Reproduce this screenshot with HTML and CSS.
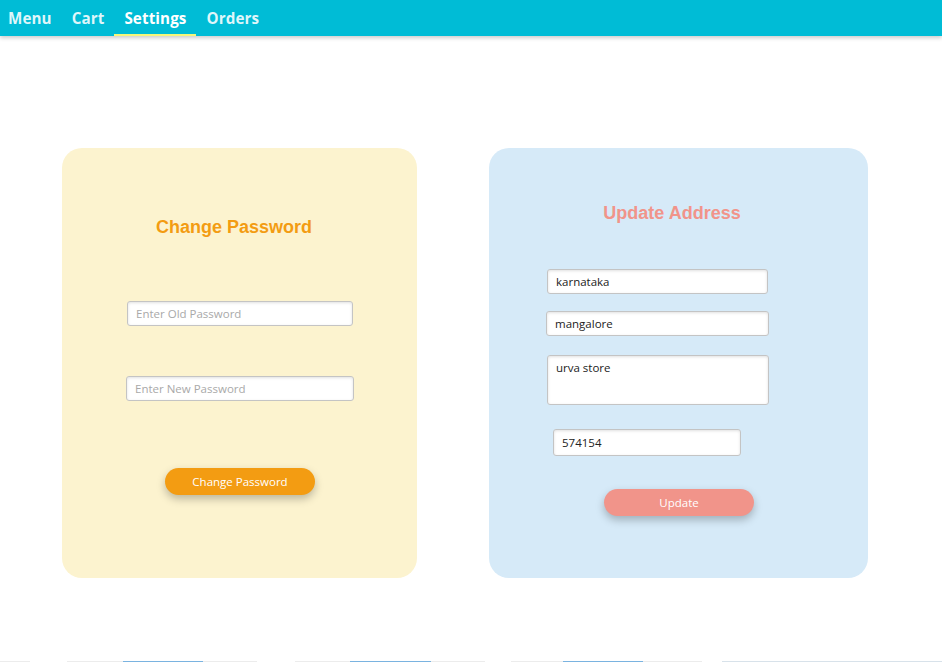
FILE: index.html
```html
<!DOCTYPE html>
<html>
<head>
<meta charset="utf-8">
<link rel="stylesheet" href="styles.css">
</head>
<body>
<nav class="nav">
  <a class="nav-link">Menu</a>
  <a class="nav-link">Cart</a>
  <a class="nav-link active">Settings</a>
  <a class="nav-link">Orders</a>
</nav>
<main class="main">
  <section class="card card-pass">
    <h2 class="title title-pass">Change Password</h2>
    <input class="field f-old" type="password" placeholder="Enter Old Password">
    <input class="field f-new" type="password" placeholder="Enter New Password">
    <button class="btn btn-pass">Change Password</button>
  </section>
  <section class="card card-addr">
    <h2 class="title title-addr">Update Address</h2>
    <input class="field f-state" type="text" value="karnataka">
    <input class="field f-city" type="text" value="mangalore">
    <textarea class="field f-area">urva store</textarea>
    <input class="field f-pin" type="text" value="574154">
    <button class="btn btn-addr">Update</button>
  </section>
</main>
<div class="strip">
  <span class="seg s1"></span>
  <span class="seg s2"><i class="blue b2"></i></span>
  <span class="seg s3"><i class="blue b3"></i></span>
  <span class="seg s4"><i class="blue b4"></i></span>
  <span class="seg s5"></span>
</div>
</body>
</html>
```
FILE: styles.css
```css
* { box-sizing: border-box; }
html, body { margin: 0; padding: 0; }
body {
  width: 942px;
  height: 662px;
  overflow: hidden;
  background: #fff;
  font-family: "Open Sans", "Noto Sans", sans-serif;
  display: flex;
  flex-direction: column;
}
.nav {
  flex: 0 0 36px;
  height: 36px;
  background: #00bcd6;
  display: flex;
  align-items: stretch;
  box-shadow: 0 2px 4px rgba(0,0,0,0.2);
  position: relative;
  z-index: 1;
}
.nav-link {
  display: flex;
  align-items: center;
  padding: 2px 10px 0;
  font-weight: 700;
  font-size: 15.2px;
  letter-spacing: 0.1px;
  color: #dff6fa;
  border-bottom: 2px solid transparent;
}
.nav-link:first-child { padding-left: 8px; }
.nav-link.active {
  color: #ffffff;
  border-bottom-color: #f6f77a;
}
.main {
  flex: 0 0 auto;
  display: flex;
  padding: 112px 0 0 62px;
  gap: 72px;
}
.card {
  height: 430px;
  border-radius: 20px;
  display: flex;
  flex-direction: column;
  align-items: flex-start;
}
.card-pass { width: 355px; background: #fcf3cf; padding-top: 68px; }
.card-addr { width: 379px; background: #d6eaf8; padding-top: 54px; }
.title {
  margin: 0;
  width: 100%;
  text-align: center;
  font-family: "Liberation Sans", Arial, sans-serif;
  font-weight: 700;
  font-size: 18px;
  line-height: 22px;
}
.title-pass { color: #f39c12; padding-right: 11px; }
.title-addr { color: #f1948a; padding-right: 13px; }
.field {
  display: block;
  border: 1px solid #c4c4c4;
  border-radius: 3px;
  background: #fff;
  box-shadow: inset 0 1px 3px rgba(0,0,0,0.12);
  font-family: "Open Sans", "Noto Sans", sans-serif;
  font-size: 11.5px;
  color: #222;
  padding: 0 8px;
  outline: none;
  margin: 0;
}
.field::placeholder { color: #a9a9a9; }
.f-old { margin: 63px 0 0 65px; width: 226px; height: 25px; }
.f-new { margin: 50px 0 0 64px; width: 228px; height: 25px; }
.f-state { margin: 45px 0 0 58px; width: 221px; height: 25px; }
.f-city { margin: 17px 0 0 57px; width: 223px; height: 25px; }
.f-area {
  margin: 19px 0 0 58px; width: 222px; height: 50px;
  resize: none; padding: 4px 8px; line-height: 16px;
}
.f-pin { margin: 24px 0 0 64px; width: 188px; height: 27px; }
.btn {
  width: 150px;
  height: 27px;
  border: none;
  border-radius: 14px;
  color: #fff;
  font-family: "Open Sans", "Noto Sans", sans-serif;
  font-size: 11.5px;
  padding: 0;
  box-shadow: 0 4px 8px rgba(0,0,0,0.25);
}
.btn-pass { background: #f39c12; margin: 67px 0 0 103px; }
.btn-addr { background: #f1948a; margin: 33px 0 0 115px; }
.strip {
  flex: 0 0 1px;
  height: 1px;
  display: flex;
  margin-top: 83px;
}
.seg { display: block; height: 1px; background: #ececec; position: relative; }
.s1 { width: 30px; }
.s2 { width: 190px; margin-left: 37px; }
.s3 { width: 190px; margin-left: 38px; }
.s4 { width: 191px; margin-left: 26px; }
.s5 { width: 220px; margin-left: 20px; background: #d8e2ea; }
.blue { display: block; position: absolute; top: 0; left: 0; height: 1px; background: #7ab3e0; }
.b2 { left: 56px; width: 80px; }
.b3 { left: 55px; width: 81px; }
.b4 { left: 52px; width: 80px; }
```
